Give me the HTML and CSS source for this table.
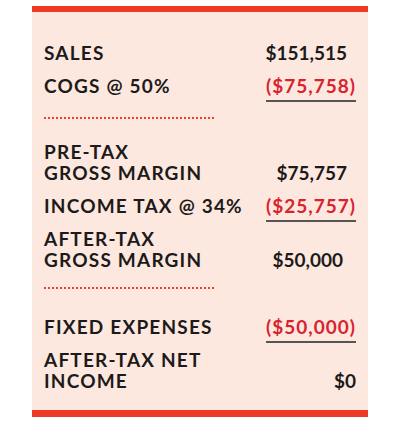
FILE: index.html
```html
<!DOCTYPE html>
<html lang="en">
<head>
    <meta charset="UTF-8">
    <meta name="viewport" content="width=device-width, initial-scale=1.0">
    <title>Break-even statement</title>
    <link rel="stylesheet" href="styles.css">
</head>
<body>
    <div class="panel">
        <div class="section">
            <div class="row">
                <span class="label">SALES</span>
                <span class="value pad-s">$151,515</span>
            </div>
            <div class="row">
                <span class="label">COGS @ 50%</span>
                <span class="value neg">($75,758)</span>
            </div>
        </div>
        <div class="divider"></div>
        <div class="section">
            <div class="row">
                <span class="label">PRE-TAX<br>GROSS MARGIN</span>
                <span class="value pad-s">$75,757</span>
            </div>
            <div class="row">
                <span class="label">INCOME TAX @ 34%</span>
                <span class="value neg">($25,757)</span>
            </div>
            <div class="row">
                <span class="label">AFTER-TAX<br>GROSS MARGIN</span>
                <span class="value pad-m">$50,000</span>
            </div>
        </div>
        <div class="divider divider-2"></div>
        <div class="section">
            <div class="row">
                <span class="label">FIXED EXPENSES</span>
                <span class="value neg">($50,000)</span>
            </div>
            <div class="row">
                <span class="label">AFTER-TAX NET<br>INCOME</span>
                <span class="value">$0</span>
            </div>
        </div>
    </div>
</body>
</html>
```

FILE: styles.css
```css
* { box-sizing: border-box; margin: 0; padding: 0; }
body { background: #fff; font-family: Lato, 'Open Sans', Arial, sans-serif; color: #1c1a1a; }
.panel { width: 336px; margin: 6px 32px 0 32px; background: #fde8df; border-top: 6px solid #ee3a22; border-bottom: 7px solid #ee3a22; padding: 30px 12px 19px 12px; }
.section { display: flex; flex-direction: column; gap: 12px; }
.row { display: grid; grid-template-columns: 1fr auto; align-items: end; font-size: 19px; line-height: 21px; font-weight: 700; }
.label { letter-spacing: 1.2px; }
.value { text-align: right; }
.pad-s { padding-right: 9px; }
.pad-m { padding-right: 13px; }
.neg { color: #d8232f; letter-spacing: 1px; text-decoration: underline; text-decoration-color: #555; text-decoration-thickness: 2px; text-underline-offset: 7px; text-decoration-skip-ink: none; }
.divider { width: 170px; border-top: 2px dotted #e8432a; margin: 21px 0 22px 0; }
.divider-2 { margin: 17px 0 27px 0; }
```
